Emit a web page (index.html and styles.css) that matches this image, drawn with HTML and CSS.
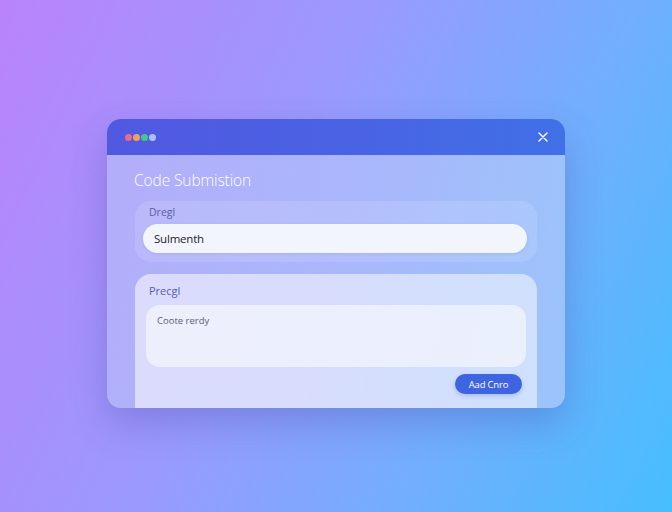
FILE: index.html
```html
<!DOCTYPE html>
<html>
<head>
<meta charset="utf-8">
<link rel="stylesheet" href="styles.css">
</head>
<body>
<div class="stage">
  <div class="window">
    <div class="titlebar">
      <div class="dots">
        <span class="dot red"></span>
        <span class="dot orange"></span>
        <span class="dot green"></span>
        <span class="dot blue"></span>
      </div>
      <svg class="close" width="10" height="10" viewBox="0 0 10 10"><path d="M1 1L9 9M9 1L1 9" stroke="#fff" stroke-width="1.4" stroke-linecap="round"/></svg>
    </div>
    <div class="content">
      <h1 class="title">Code Submistion</h1>
      <div class="card card-top">
        <div class="label">Dregl</div>
        <div class="input">Sulmenth</div>
      </div>
      <div class="card card-bottom">
        <div class="label">Precgl</div>
        <div class="textarea">Coote rerdy</div>
        <div class="actions"><button class="btn">Aad Cnro</button></div>
      </div>
    </div>
  </div>
</div>
</body>
</html>
```
FILE: styles.css
```css
html, body {
  margin: 0;
  padding: 0;
  width: 672px;
  height: 512px;
  overflow: hidden;
}
body {
  background: linear-gradient(115deg, #b983fc 0%, #9b99fc 40%, #72aefd 70%, #46befe 100%);
  font-family: "Open Sans", "Noto Sans", sans-serif;
}
.stage {
  padding-top: 119px;
  display: flex;
  justify-content: center;
}
.window {
  width: 458px;
  height: 289px;
  border-radius: 14px;
  overflow: hidden;
  display: flex;
  flex-direction: column;
  box-shadow: 0 16px 36px rgba(70, 70, 170, 0.3);
  background: linear-gradient(100deg, #b3aef9 0%, #aab6fb 50%, #9bc4fb 100%);
}
.titlebar {
  height: 36px;
  flex: none;
  background: linear-gradient(90deg, #5158e1 0%, #4a62e4 50%, #4070e7 100%);
  display: flex;
  align-items: center;
  justify-content: space-between;
  padding: 0 17px 0 18px;
}
.dots {
  display: flex;
  gap: 1px;
}
.dot {
  width: 7px;
  height: 7px;
  border-radius: 50%;
  display: block;
}
.red { background: #e66b8c; }
.orange { background: #e9a261; }
.green { background: #3fca8b; }
.blue { background: #a9c1f6; }
.close { display: block; }
.content {
  flex: 1;
  padding: 14px 28px 0 28px;
  display: flex;
  flex-direction: column;
}
.title {
  margin: 0 0 0 -1px;
  font-size: 15.5px;
  font-weight: 300;
  color: #ffffff;
  line-height: 22px;
  letter-spacing: -0.1px;
}
.card {
  border-radius: 16px;
}
.card-top {
  margin-top: 10px;
  height: 61px;
  box-sizing: border-box;
  background: rgba(255, 255, 255, 0.12);
  padding: 4px 10px 0 8px;
}
.label {
  font-size: 10.5px;
  color: #5a5ea6;
  line-height: 14px;
  padding-left: 6px;
}
.input {
  margin-top: 5px;
  height: 29px;
  border-radius: 15px;
  background: #f3f5fd;
  box-shadow: 0 1px 3px rgba(90, 100, 190, 0.15);
  font-size: 11.5px;
  color: #1e2130;
  line-height: 29px;
  padding-left: 11px;
  letter-spacing: -0.2px;
}
.card-bottom {
  margin-top: 12px;
  flex: 1;
  border-radius: 16px 16px 0 0;
  background: linear-gradient(100deg, rgba(255,255,255,0.55) 0%, rgba(255,255,255,0.5) 100%);
  padding: 10px 11px 0 11px;
}
.card-bottom .label {
  padding-left: 3px;
  font-size: 11px;
}
.textarea {
  margin-top: 7px;
  height: 62px;
  border-radius: 14px;
  background: rgba(240, 242, 253, 0.85);
  box-sizing: border-box;
  padding: 10px 11px 9px;
  font-size: 9.5px;
  color: #5c5e75;
  line-height: 12px;
}
.actions {
  display: flex;
  justify-content: flex-end;
  padding: 7px 4px 0 0;
}
.btn {
  border: none;
  height: 20px;
  width: 67px;
  border-radius: 10px;
  background: #3f64e0;
  color: #ffffff;
  font-family: "Open Sans", "Noto Sans", sans-serif;
  font-size: 9.5px;
  letter-spacing: -0.2px;
  padding: 0;
  box-shadow: 0 2px 4px rgba(50, 80, 200, 0.25);
}
```
